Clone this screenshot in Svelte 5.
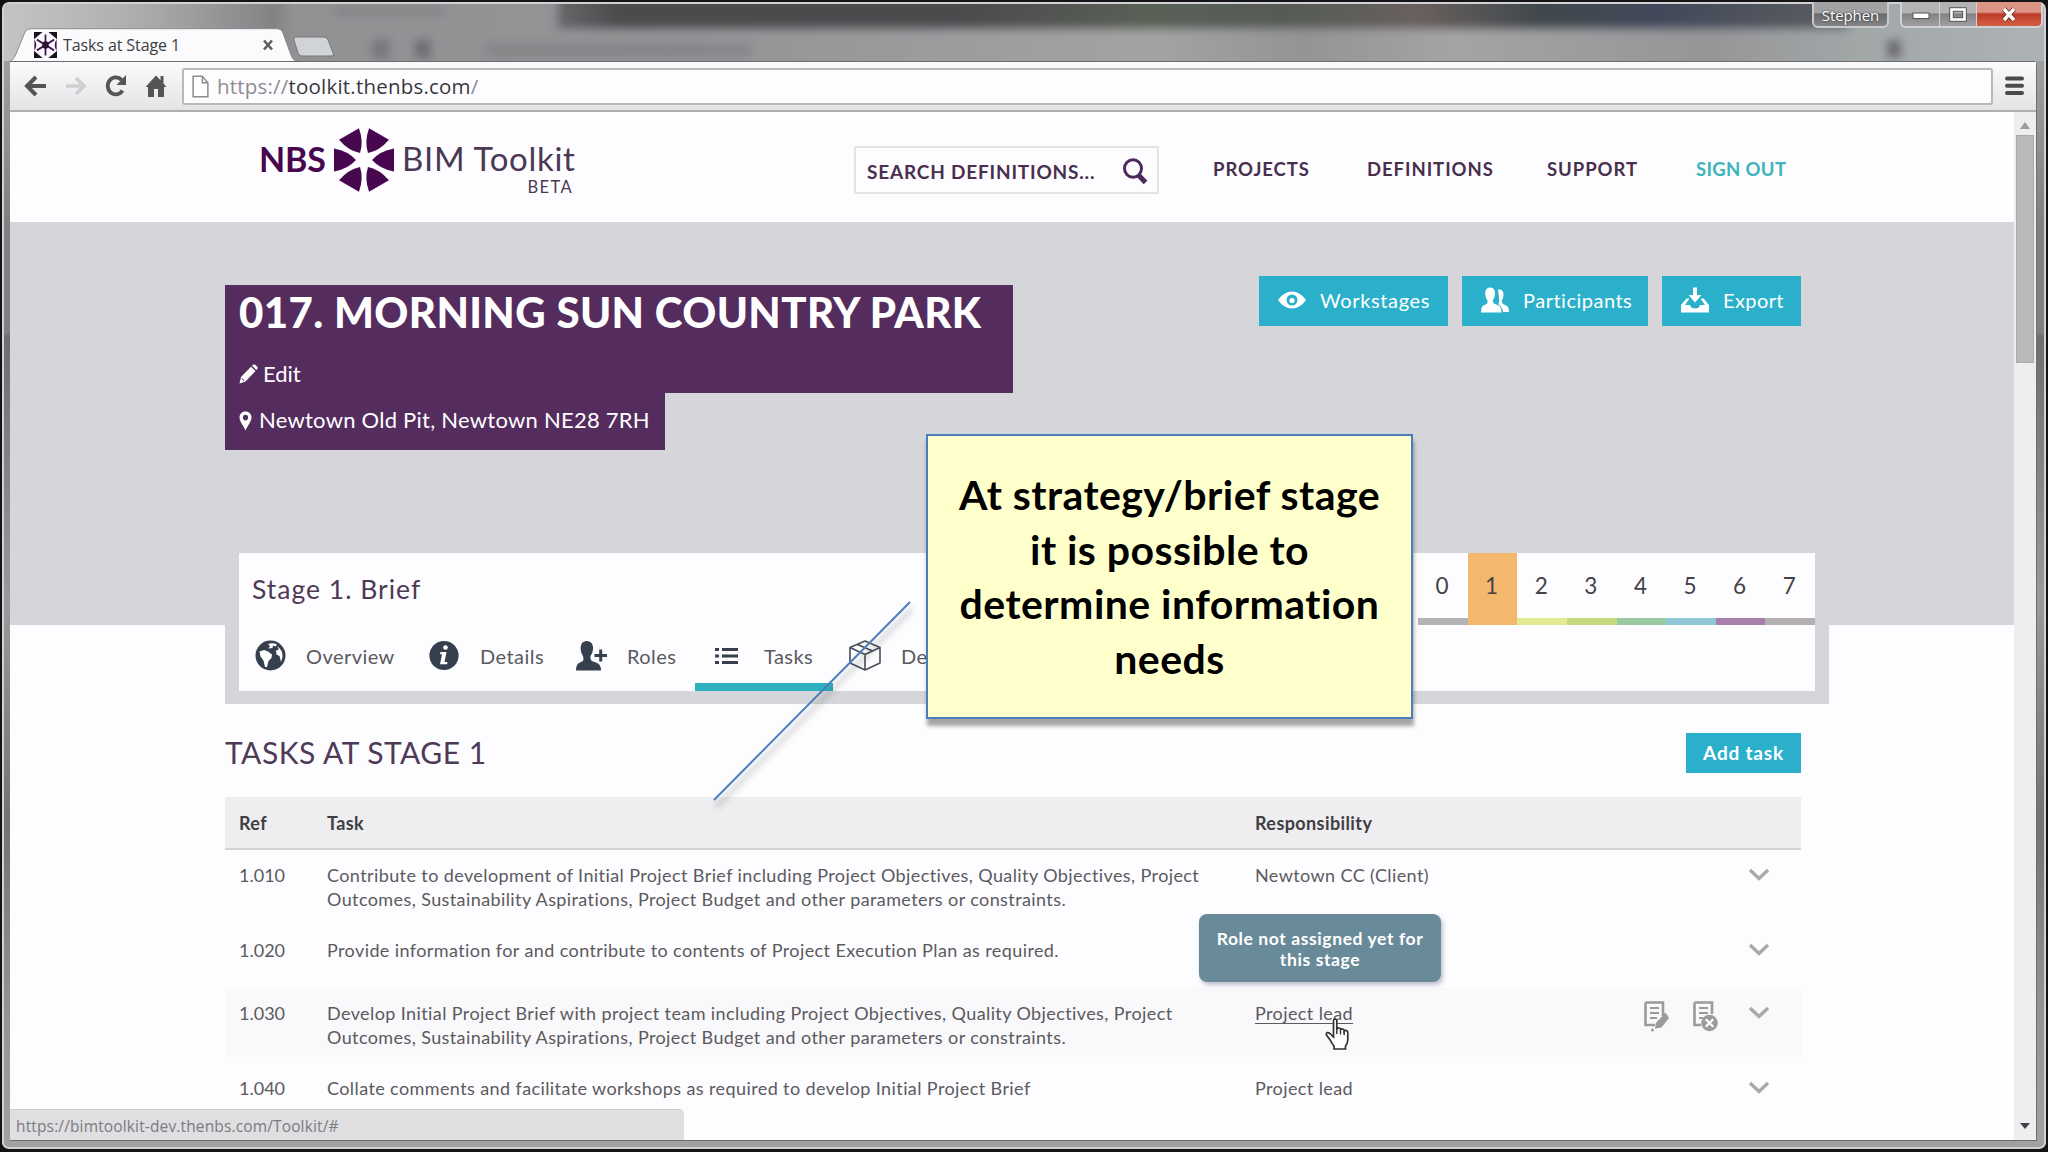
<script>
  const nav = ["PROJECTS", "DEFINITIONS", "SUPPORT"];

  const tabs = [
    { icon: "globe", label: "Overview" },
    { icon: "info", label: "Details" },
    { icon: "role", label: "Roles" },
    { icon: "list", label: "Tasks" },
    { icon: "cube", label: "De" },
  ];

  const stageColors = ["#b4b3b6", "#f3b86e", "#e4ea93", "#c5db7e", "#9bcaa2", "#91c6d4", "#a87eab", "#b5b0b4"];

  const tasks = [
    {
      ref: "1.010",
      lines: [
        "Contribute to development of Initial Project Brief including Project Objectives, Quality Objectives, Project",
        "Outcomes, Sustainability Aspirations, Project Budget and other parameters or constraints.",
      ],
      role: "Newtown CC (Client)",
    },
    {
      ref: "1.020",
      lines: ["Provide information for and contribute to contents of Project Execution Plan as required."],
      role: "",
    },
    {
      ref: "1.030",
      lines: [
        "Develop Initial Project Brief with project team including Project Objectives, Quality Objectives, Project",
        "Outcomes, Sustainability Aspirations, Project Budget and other parameters or constraints.",
      ],
      role: "Project lead",
    },
    {
      ref: "1.040",
      lines: ["Collate comments and facilitate workshops as required to develop Initial Project Brief"],
      role: "Project lead",
    },
  ];

  let activeTab = $state("Tasks");
  let stage = $state(1);
  let hovered = $state(2);
</script>

{#snippet petals()}
  {#each [0, 60, 120, 180, 240, 300] as angle}
    <path d="M8 0Q16 -9 30 -11.500V11.500Q16 9 8 0Z" transform="rotate({angle})" />
  {/each}
{/snippet}

<div class="window">
  <div class="title-bar">
    <div class="ghost" aria-hidden="true">
      <i class="band"></i>
      <i class="blob one"></i>
      <i class="blob two"></i>
      <i class="blob three"></i>
      <i class="blob four"></i>
      <i class="blob five"></i>
    </div>
    <div class="tab">
      <svg class="tab-shape" width="290" height="34" viewBox="0 0 290 34">
        <path d="M0 34C4 32 5 30 7 26L16 4Q18 .7 22 .7H268Q272 .7 273.500 4L282 27Q284 33 289 34Z" fill="#fbfafc" stroke="#8d8c8f" />
      </svg>
      <svg class="favicon" width="23" height="26" viewBox="-32 -32 64 64" preserveAspectRatio="none">
        <path d="M-32 -32H-8L-32 -14ZM32 -32H8L32 -14ZM-32 32H-8L-32 14ZM32 32H8L32 14Z" fill="#1c1020" />
        <path d="M0 -26V26M-24 -13L24 13M-24 13L24 -13" stroke="#451550" stroke-width="5" />
        <path d="M-31 -14Q-20 0 -31 14ZM31 -14Q20 0 31 14Z" fill="#451550" />
        <circle r="9" fill="#2c1233" />
      </svg>
      <span class="tab-title">Tasks at Stage 1</span>
      <svg class="tab-close" width="12" height="12" viewBox="0 0 12 12"><path d="M2 1.500L10 10.500M10 1.500L2 10.500" stroke="#5d5c5f" stroke-width="2.600" /></svg>
    </div>
    <svg class="new-tab" width="42" height="21" viewBox="0 0 42 21">
      <path d="M1 1H31Q34 1 35 4L40.500 18Q41 20 38 20H9Q6 20 5 17L1 4Z" fill="#d0d4d6" stroke="#777" />
    </svg>
    <div class="user-btn">Stephen</div>
    <div class="win-btns">
      <span class="wb min"><svg width="18" height="8" viewBox="0 0 18 8"><rect x="1" y="1" width="16" height="5.500" fill="#fff" stroke="#555" /></svg></span>
      <span class="wb max"><svg width="18" height="15" viewBox="0 0 18 15"><rect x="2.500" y="2.500" width="13" height="10" fill="none" stroke="#555" stroke-width="4.500" /><rect x="2.500" y="2.500" width="13" height="10" fill="none" stroke="#fff" stroke-width="2.600" /></svg></span>
      <span class="wb close"><svg width="18" height="15" viewBox="0 0 18 15"><path d="M4 2L14 13M14 2L4 13" stroke="#6c2d27" stroke-width="5" /><path d="M4 2L14 13M14 2L4 13" stroke="#fff" stroke-width="3.400" /></svg></span>
    </div>
  </div>

  <div class="client">
    <div class="toolbar">
      <svg class="tool" width="24" height="22" viewBox="0 0 24 22"><path d="M12 2L3 11L12 20M3.500 11H22" fill="none" stroke="#555457" stroke-width="4" /></svg>
      <svg class="tool" width="24" height="22" viewBox="0 0 24 22"><path d="M12 3L20 11L12 19M20 11H2" fill="none" stroke="#cfced1" stroke-width="3.600" /></svg>
      <svg class="tool" width="24" height="24" viewBox="0 0 24 24"><path d="M18.500 16.500A8 8.500 0 1 1 17.500 6" fill="none" stroke="#555457" stroke-width="3.800" /><path d="M22 1V11H12.500Z" fill="#555457" /></svg>
      <svg class="tool" width="24" height="24" viewBox="0 0 24 24"><path d="M12 1.500L1.500 13H4V23H10V15H14V23H20V13H22.500L19.500 9.500V2H16.500V6.300Z" fill="#555457" /></svg>
      <div class="address">
        <svg width="17" height="23" viewBox="0 0 18 24"><path d="M1.200 1.200H11L16.800 8V22.800H1.200ZM11 1.200V8H16.800" fill="#fff" stroke="#8d8c8f" stroke-width="1.600" /></svg>
        <span class="url"><span class="scheme">https://</span>toolkit.thenbs.com<span class="scheme">/</span></span>
      </div>
      <svg class="menu" width="19" height="20" viewBox="0 0 19 20"><path d="M2 2.500H17M2 9.700H17M2 17H17" stroke="#4a494c" stroke-width="4" stroke-linecap="round" /></svg>
    </div>

    <div class="viewport">
      <div class="page">
        <header class="site-header">
          <div class="logo">
            <span class="nbs">NBS</span>
            <svg class="mark" width="62" height="64" viewBox="-31 -32 62 64"><g fill="#47074f">{@render petals()}</g></svg>
            <span class="product">BIM Toolkit<small>BETA</small></span>
          </div>
          <div class="search">
            <span>SEARCH DEFINITIONS...</span>
            <svg width="27" height="27" viewBox="0 0 27 27"><ellipse cx="11" cy="10.500" rx="8.500" ry="8.800" fill="none" stroke="#4d2a5c" stroke-width="3" /><path d="M16.500 17L23.500 24.500" stroke="#4d2a5c" stroke-width="5" /></svg>
          </div>
          <nav class="nav">
            {#each nav as item}
              <span>{item}</span>
            {/each}
            <span class="sign-out">SIGN OUT</span>
          </nav>
        </header>

        <section class="hero">
          <div class="project">
            <div class="name-block">
              <h1>017. MORNING SUN COUNTRY PARK</h1>
              <div class="edit">
                <svg width="19" height="20" viewBox="0 0 19 20"><path d="M.5 19.500L2 13L12 2.800L16.500 7L6.500 17.500ZM13 1.800L14.500 .6Q15.500 0 16.500 1L18.300 2.800Q19 4 18.200 5L17.400 6Z" fill="#fff" /><path d="M3 14.500L5 17" stroke="#552c5e" /></svg>
                <span>Edit</span>
              </div>
            </div>
            <div class="place">
              <svg width="13" height="20" viewBox="0 0 13 20"><path fill-rule="evenodd" d="M6.500 .5C2.800 .5 .5 3.200 .5 6.500C.5 10 4.500 15 6.500 19.500C8.500 15 12.500 10 12.500 6.500C12.500 3.200 10.200 .5 6.500 .5ZM6.500 3.800A2.600 2.800 0 1 1 6.500 9.400A2.600 2.800 0 1 1 6.500 3.800Z" fill="#fff" /></svg>
              <span>Newtown Old Pit, Newtown NE28 7RH</span>
            </div>
          </div>
          <div class="actions">
            <button class="btn workstages">
              <svg width="28" height="18" viewBox="0 0 28 18"><path d="M0 9Q6 .5 14 .5T28 9Q22 17.500 14 17.500T0 9Z" fill="#fff" /><circle cx="14" cy="9" r="5.500" fill="#2bb0cb" /><circle cx="14" cy="9.500" r="2.600" fill="#fff" /></svg>
              <span>Workstages</span>
            </button>
            <button class="btn participants">
              <svg width="28" height="26" viewBox="0 0 28 26"><path d="M17 2.500C21 2 23 4.500 22.500 9Q22 12 20.800 13.500Q21 16 22 17L26 19Q28 20.500 28 25H22Q21.500 20 17.500 17.500Q18.500 14 18 11Z" fill="#fff" /><path d="M9 .5C13 .5 14.300 3.500 14 7.500Q13.500 11 12 13Q11.500 15.500 13 16.500L17.500 18.500Q20.500 20 20.500 25.500H0Q0 20 2 18.700L6 16.700Q7 15.500 6.300 13Q4.500 11 4.300 7.500C4 3.500 5.500 .5 9 .5Z" fill="#fff" /></svg>
              <span>Participants</span>
            </button>
            <button class="btn export">
              <svg width="28" height="26" viewBox="0 0 28 26"><path d="M12 .5H16V8H20.500L14 15.500L7.500 8H12Z" fill="#fff" /><path d="M5.500 11.500L0 18V25.500H28V18L22.500 11.500H19.500L24 18H19Q18 21.500 14 21.500T9 18H4L8.500 11.500Z" fill="#fff" /></svg>
              <span>Export</span>
            </button>
          </div>
        </section>

        <section class="stage-frame">
          <div class="stage-card">
            <div class="stage-top">
              <h2>Stage 1. Brief</h2>
              <div class="stages">
                {#each stageColors as color, i}
                  <button class="stage" class:current={stage === i} style:--stage={color} onclick={() => (stage = i)}>{i}</button>
                {/each}
              </div>
            </div>
            <div class="tabs">
              {#each tabs as tab}
                <button class="tab-item {tab.icon}" class:active={activeTab === tab.label} onclick={() => (activeTab = tab.label)}>
                  {#if tab.icon === "globe"}
                    <svg width="31" height="31" viewBox="0 0 31 31"><circle cx="15.500" cy="15.500" r="13.800" fill="#363f4d" stroke="#363f4d" stroke-width="2.400" /><path d="M4.500 11.500L9 10L13 11.500L17 14.500L16.500 18L13.500 21L12 27L10 27L8.500 20.500L5.500 16.500ZM13 4Q18 2.500 22 4.500L20.500 6.500L18 5.500L17.500 8L13.500 8.500L15 6ZM22 6Q28 10 27.500 17L26 22L24.500 16L21.500 14.500L21 10.500L24 9.500Z" fill="#fff" /></svg>
                  {:else if tab.icon === "info"}
                    <svg width="30" height="31" viewBox="0 0 30 31"><circle cx="15" cy="15.500" r="14.600" fill="#363f4d" /><circle cx="16.500" cy="7.500" r="2.300" fill="#fff" /><path d="M11.500 12H17.500L15.500 22H18.500L18 24.300H11L13 14.300H11Z" fill="#fff" /></svg>
                  {:else if tab.icon === "role"}
                    <svg width="31" height="30" viewBox="0 0 31 30"><path d="M10.500 0C15.500 0 17.500 4 17 8.500Q16.500 12.500 14.500 15Q14 19 16 20L21 22Q25 23.500 25 29.500H0Q0 23.500 3 22L7 20Q8 18.500 7 15Q5 12.500 4.700 8.500C4.500 4 6 0 10.500 0Z" fill="#363f4d" /><path d="M18.500 14.500H31M24.700 8.500V20.500" stroke="#363f4d" stroke-width="3" /></svg>
                  {:else if tab.icon === "list"}
                    <svg width="23" height="18" viewBox="0 0 23 18"><path d="M0 2.500H4M0 9H4M0 15.500H4M7 2.500H23M7 9H23M7 15.500H23" stroke="#363f4d" stroke-width="3" /></svg>
                  {:else}
                    <svg width="32" height="31" viewBox="0 0 32 31"><path d="M16 1L31 7.500V23L16 30L1 23V7.500ZM1 7.500L16 14.500L31 7.500M16 14.500V30M8.500 4.500L23.500 11" fill="none" stroke="#4a505a" stroke-width="1.600" stroke-linejoin="round" /></svg>
                  {/if}
                  <span>{tab.label}</span>
                </button>
              {/each}
            </div>
          </div>
        </section>

        <section class="tasks">
          <div class="tasks-head">
            <h3>TASKS AT STAGE 1</h3>
            <button class="btn add">Add task</button>
          </div>
          <div class="row head">
            <span>Ref</span>
            <span>Task</span>
            <span>Responsibility</span>
          </div>
          {#each tasks as task, i}
            <!-- svelte-ignore a11y_no_static_element_interactions -->
            <div class="row" class:single={task.lines.length === 1} class:hover={hovered === i} onmouseenter={() => (hovered = i)}>
              <span class="ref">{task.ref}</span>
              <div class="desc">
                {#each task.lines as line}
                  <p>{line}</p>
                {/each}
              </div>
              <div class="resp">
                <span class="role">{task.role}</span>
                {#if hovered === i}
                  <div class="tooltip">Role not assigned yet for this stage</div>
                  <svg class="pointer" width="24" height="32" viewBox="0 0 24 32"><path d="M8.500 2.500Q8.500 1 10 1T11.800 2.500V12Q12 9.500 14 10T15.500 12Q16 10.500 17.700 11T19.200 13Q20 12 21.500 12.600T22.800 15V22Q22.500 26 20.500 28V31H9V28Q7 26 5.500 22.500L1.500 17Q.8 15 2.500 14.600T6 16.500L8.500 19Z" fill="#fff" stroke="#333" stroke-width="1.700" /><path d="M11.800 12V16M15.500 12V16.500M19.200 13V17" stroke="#333" stroke-width="1.400" /></svg>
                {/if}
              </div>
              <div class="row-tools">
                {#if hovered === i}
                  <svg class="doc" width="25" height="31" viewBox="0 0 25 31"><path d="M1.500 1.500H19V15M1.500 1.500V24H11" fill="none" stroke="#9b9a9d" stroke-width="2.600" /><path d="M6 7H15M6 12H15M6 17H13" stroke="#9b9a9d" stroke-width="2" /><path d="M21.500 11.500L25 17L17.500 26.500L11 27.500L12 22Z" fill="#9b9a9d" /><circle cx="8.500" cy="29" r="1.500" fill="#9b9a9d" /></svg>
                  <svg class="doc" width="25" height="31" viewBox="0 0 25 31"><path d="M1.500 1.500H19V13M1.500 1.500V24H8" fill="none" stroke="#9b9a9d" stroke-width="2.600" /><path d="M6 7H15M6 12H15M6 17H10" stroke="#9b9a9d" stroke-width="2" /><circle cx="16.500" cy="22" r="8.300" fill="#9b9a9d" /><path d="M12.800 18.200L20.200 25.800M20.200 18.200L12.800 25.800" stroke="#fff" stroke-width="2.200" /></svg>
                {/if}
                <svg class="chevron" width="22" height="13" viewBox="0 0 22 13"><path d="M2 2L11 10.500L20 2" fill="none" stroke="#a9a8ab" stroke-width="3.400" /></svg>
              </div>
            </div>
          {/each}
        </section>
      </div>
      <div class="scrollbar">
        <svg width="10" height="7" viewBox="0 0 10 7"><path d="M5 0L10 7H0Z" fill="#9c9b9e" /></svg>
        <div class="thumb"></div>
        <svg class="down" width="10" height="6" viewBox="0 0 10 6"><path d="M0 0H10L5 6Z" fill="#434245" /></svg>
      </div>
      <div class="status">https://bimtoolkit-dev.thenbs.com/Toolkit/#</div>
    </div>
  </div>

  <svg class="leader" width="210" height="215" viewBox="0 0 210 215">
    <path d="M200 5L4 203" stroke="#4a7ebb" stroke-width="2" />
  </svg>
  <div class="callout">At strategy/brief stage it is possible to determine information needs</div>
</div>

<style>
  :global(body) {
    background: #111;
    overflow: hidden;
  }

  .window {
    position: relative;
    box-sizing: border-box;
    width: 2048px;
    height: 1152px;
    padding: 0 9px 8px 8px;
    overflow: hidden;
    border: 2px solid #151416;
    border-width: 2px 2px 3px 2px;
    border-radius: 9px;
    background: linear-gradient(#aaaaab 0, #7f7f81 230px, #808082 330px, #6e6d70 335px, #9a999b 600px, #737274 820px, #929194 1000px, #a2a1a3);
    box-shadow: inset 0 0 0 2px #d2d1d4;
    font-family: Lato, "Open Sans", sans-serif;
    display: flex;
    flex-direction: column;
  }

  button {
    margin: 0;
    padding: 0;
    border: none;
    background: none;
    font: inherit;
    color: inherit;
    cursor: pointer;
  }

  h1,
  h2,
  h3,
  p {
    margin: 0;
    font-weight: 400;
  }

  .title-bar {
    position: relative;
    flex: none;
    height: 59px;
    display: flex;
    font-family: "Open Sans", sans-serif;
  }

  .ghost {
    position: absolute;
    inset: 2px -7px 0 -6px;
    overflow: hidden;
    border-radius: 6px 6px 0 0;
    background: linear-gradient(90deg, #c3c3c2 0, #b9bcbb 60px, #aeb1b0 120px, #a09fa1 180px, #838285 270px, #929194 290px, #949396 700px, #a3a2a4 1150px, #949396 1300px, #a4a3a5 1450px, #969597 1700px, #a1a6a7 1850px, #adb3b4 2040px);
  }

  .band {
    position: absolute;
    left: 554px;
    top: -12px;
    width: 1290px;
    height: 36px;
    background: linear-gradient(90deg, #68676a 0, #4b4a4d 60px 400px, #596056 590px, #565c55 730px, #68605d 860px, #41484c 980px, #42485a 1100px, #5b5e60);
    filter: blur(5px);
  }

  .blob {
    position: absolute;
    top: 36px;
    height: 18px;
    background: #6f6e71;
    filter: blur(4px);
  }

  .one {
    left: 368px;
    width: 18px;
    opacity: 0.7;
  }

  .two {
    left: 411px;
    width: 16px;
  }

  .three {
    left: 482px;
    width: 265px;
    height: 13px;
    top: 40px;
    opacity: 0.35;
  }

  .four {
    left: 1883px;
    width: 14px;
  }

  .five {
    left: 330px;
    top: 2px;
    width: 110px;
    height: 10px;
    opacity: 0.35;
  }

  .tab {
    position: relative;
    width: 286px;
    height: 34px;
    margin-top: 26px;
    display: flex;
    align-items: center;
  }

  .tab-shape {
    position: absolute;
    left: -1px;
    top: 0;
  }

  .favicon {
    position: relative;
    margin-left: 24px;
  }

  .tab-title {
    position: relative;
    width: 199px;
    margin-left: 6px;
    font-size: 16px;
    letter-spacing: -0.1px;
    color: #3d3c40;
  }

  .tab-close {
    position: relative;
  }

  .new-tab {
    position: relative;
    margin: 34px 0 0 -3px;
  }

  .user-btn {
    position: relative;
    box-sizing: border-box;
    width: 77px;
    height: 26px;
    margin-left: auto;
    border: 2px solid #c9c8ca;
    border-top: none;
    border-radius: 0 0 6px 6px;
    background: linear-gradient(#a2a1a3 0 45%, #6a696b 50%, #858486);
    color: #fff;
    font-size: 15px;
    letter-spacing: -0.1px;
    line-height: 26px;
    text-align: center;
    text-shadow: 0 0 2px #222;
  }

  .win-btns {
    position: relative;
    box-sizing: border-box;
    display: flex;
    width: 143px;
    height: 26px;
    margin: 0 -6px 0 11px;
    border: 2px solid #d2d1d4;
    border-top: none;
    border-radius: 0 0 6px 6px;
    overflow: hidden;
  }

  .wb {
    display: flex;
    align-items: center;
    justify-content: center;
    background: linear-gradient(#b3b2b5 0 45%, #828184 50%, #a09fa2);
  }

  .min {
    width: 37px;
    padding-top: 4px;
    border-right: 1px solid #d2d1d4;
  }

  .max {
    width: 36px;
    border-right: 1px solid #d2d1d4;
  }

  .close {
    flex: 1;
    background: linear-gradient(#dc9487 0 42%, #bd3b27 50%, #d35f43);
  }

  .client {
    position: relative;
    flex: 1;
    min-height: 0;
    display: flex;
    flex-direction: column;
    border: 1px solid #6e6d70;
    border-left: 0;
    border-radius: 0 4px 0 0;
    background: #fdfcfe;
  }

  .toolbar {
    box-sizing: border-box;
    height: 50px;
    flex: none;
    display: flex;
    align-items: center;
    padding: 0 12px 0 14px;
    gap: 16px;
    background: linear-gradient(#fbfafc, #e4e3e6);
    border-bottom: 2px solid #aeadb0;
  }

  .address {
    box-sizing: border-box;
    flex: 1;
    height: 37px;
    margin-left: -2px;
    margin-right: -4px;
    padding-left: 8px;
    display: flex;
    align-items: center;
    gap: 8px;
    border: 2px solid #b9b8bb;
    border-radius: 3px;
    background: #fdfcfe;
    font-family: "Open Sans", sans-serif;
    font-size: 20.500px;
    letter-spacing: 0.2px;
    color: #39383c;
  }

  .scheme {
    color: #8d8c90;
  }

  .viewport {
    position: relative;
    flex: 1;
    min-height: 0;
    display: flex;
  }

  .page {
    width: 2004px;
    height: 100%;
    overflow: hidden;
    background: #fdfcfe;
  }

  .site-header {
    box-sizing: border-box;
    height: 110px;
    padding-left: 249px;
    display: flex;
    color: #47304f;
  }

  .logo {
    display: flex;
    width: 595px;
    padding-top: 16px;
    color: #47074f;
  }

  .nbs {
    width: 74px;
    font-size: 34px;
    font-weight: 700;
    line-height: 61px;
    letter-spacing: -0.2px;
  }

  .product {
    width: 171px;
    margin-left: 7px;
    display: flex;
    flex-direction: column;
    font-size: 33px;
    line-height: 60px;
    letter-spacing: 0.7px;
    color: #4a3854;
    white-space: nowrap;
  }

  .product small {
    align-self: flex-end;
    margin-top: -12px;
    font-size: 16.500px;
    line-height: 22px;
    letter-spacing: 1.400px;
  }

  .search {
    box-sizing: border-box;
    width: 305px;
    height: 48px;
    margin-top: 34px;
    padding: 2px 8px 0 11px;
    display: flex;
    align-items: center;
    justify-content: space-between;
    border: 2px solid #e4e3e6;
    font-size: 19px;
    font-weight: 700;
    letter-spacing: 0.800px;
  }

  .nav {
    display: grid;
    grid-template-columns: 154px 180px 149px auto;
    margin: 46px 0 0 54px;
    font-size: 18.500px;
    font-weight: 700;
    line-height: 22px;
    letter-spacing: 0.950px;
  }

  .sign-out {
    color: #3db3bb;
    letter-spacing: 0.350px;
  }

  .hero {
    box-sizing: border-box;
    height: 403px;
    padding: 54px 213px 0 215px;
    display: flex;
    justify-content: space-between;
    background: #d4d6d9;
    color: #fff;
  }

  .project {
    padding-top: 9px;
  }

  .name-block {
    box-sizing: border-box;
    width: 788px;
    height: 108px;
    padding-left: 14px;
    background: #552c5e;
  }

  h1 {
    font-size: 42px;
    font-weight: 900;
    line-height: 55px;
    letter-spacing: 0.380px;
    white-space: nowrap;
  }

  .edit {
    display: flex;
    align-items: center;
    gap: 5px;
    margin-top: 21px;
    font-size: 22px;
    line-height: 26px;
  }

  .place {
    box-sizing: border-box;
    width: 440px;
    height: 57px;
    padding: 14px 0 0 14px;
    display: flex;
    gap: 7px;
    align-items: flex-start;
    background: #552c5e;
    font-size: 22px;
    line-height: 26px;
    letter-spacing: 0.250px;
    white-space: nowrap;
  }

  .place svg {
    margin-top: 4px;
  }

  .actions {
    display: flex;
    gap: 14px;
  }

  .btn {
    box-sizing: border-box;
    height: 50px;
    display: flex;
    align-items: center;
    gap: 14px;
    padding: 0 0 2px 19px;
    background: #2bb0cb;
    color: #fff;
    font-size: 20px;
    letter-spacing: 0.650px;
    white-space: nowrap;
  }

  .workstages {
    width: 189px;
  }

  .participants {
    width: 186px;
    letter-spacing: 0.500px;
  }

  .export {
    width: 139px;
    letter-spacing: 0.400px;
  }

  .stage-frame {
    box-sizing: border-box;
    width: 1604px;
    height: 151px;
    margin: -72px 0 0 215px;
    background: #d4d6d9;
  }

  .stage-card {
    height: 138px;
    margin: 0 14px;
    background: #fdfcfe;
    overflow: hidden;
  }

  .stage-top {
    display: flex;
    justify-content: space-between;
    height: 72px;
  }

  h2 {
    margin-left: 13px;
    font-size: 26.500px;
    line-height: 72px;
    letter-spacing: 1px;
    color: #4e3a56;
  }

  .stages {
    display: flex;
  }

  .stage {
    box-sizing: border-box;
    width: 49.600px;
    height: 72px;
    padding-right: 2px;
    border-bottom: 7px solid var(--stage);
    font-size: 22.500px;
    color: #434247;
  }

  .current {
    background: var(--stage);
  }

  .tabs {
    display: grid;
    grid-template-columns: 176px 146px 134px 138px auto;
    height: 66px;
  }

  .tab-item {
    box-sizing: border-box;
    height: 66px;
    display: flex;
    align-items: center;
    padding: 0 0 5px 14px;
    gap: 20px;
    font-size: 20px;
    letter-spacing: 0.450px;
    color: #5a595e;
    white-space: nowrap;
  }

  .tab-item.globe {
    padding-left: 16px;
  }

  .tab-item.info {
    gap: 21px;
  }

  .tab-item.role {
    padding-left: 15px;
  }

  .tab-item.list {
    padding: 3px 0 0 20px;
    gap: 26px;
    border-bottom: 8px solid transparent;
  }

  .tab-item.list.active {
    border-bottom-color: #2fb0bf;
  }

  .tab-item.cube {
    padding-left: 16px;
  }

  .tasks {
    width: 1576px;
    margin-left: 215px;
  }

  .tasks-head {
    height: 93px;
    display: flex;
    justify-content: space-between;
  }

  h3 {
    margin-top: 30px;
    font-size: 30px;
    line-height: 36px;
    letter-spacing: 0.500px;
    color: #4e3a56;
  }

  .add {
    width: 115px;
    height: 40px;
    margin-top: 29px;
    padding: 0 0 1px;
    justify-content: center;
    font-size: 19px;
    font-weight: 700;
    letter-spacing: 0.800px;
  }

  .row {
    box-sizing: border-box;
    height: 75px;
    display: grid;
    grid-template-columns: 88px 928px 328px 1fr;
    padding: 13px 0 0 14px;
    border-bottom: 6px solid transparent;
    background-clip: padding-box;
    font-size: 18px;
    line-height: 24px;
    letter-spacing: 0.400px;
    color: #5b5a5e;
    white-space: nowrap;
  }

  .row.head {
    height: 53px;
    padding-top: 14px;
    border-bottom: 2px solid #d4d4d6;
    background: #eeeef0;
    font-weight: 700;
    color: #3f3e43;
  }

  .single {
    height: 63px;
  }

  .hover {
    background-color: #f9f8fa;
  }

  .ref {
    letter-spacing: 0;
  }

  .resp {
    position: relative;
  }

  .hover .role {
    text-decoration: underline;
    text-underline-offset: 3px;
  }

  .tooltip {
    position: absolute;
    left: -56px;
    top: -87px;
    box-sizing: border-box;
    width: 242px;
    height: 68px;
    padding: 14px 14px 0;
    border-radius: 8px;
    background: #698b99;
    box-shadow: 2px 3px 4px rgba(80, 80, 120, 0.35);
    color: #fff;
    font-weight: 700;
    font-size: 17.500px;
    line-height: 21px;
    letter-spacing: 0.600px;
    text-align: center;
    white-space: normal;
  }

  .pointer {
    position: absolute;
    left: 70px;
    top: 17px;
  }

  .row-tools {
    height: 31px;
    display: flex;
    justify-content: flex-end;
    gap: 24px;
    padding-right: 31px;
  }

  .chevron {
    margin: 5px 0 0 6px;
  }

  .scrollbar {
    flex: 1;
    display: flex;
    flex-direction: column;
    align-items: center;
    padding: 10px 0 11px;
    background: #eceef0;
  }

  .thumb {
    box-sizing: border-box;
    width: 18px;
    height: 228px;
    margin-top: 6px;
    border: 1px solid #a9a8ab;
    background: #b9b8bb;
  }

  .down {
    margin-top: auto;
  }

  .status {
    position: absolute;
    left: 0;
    bottom: 0;
    box-sizing: border-box;
    width: 674px;
    height: 31px;
    padding-left: 6px;
    border-radius: 0 5px 0 0;
    border-top: 1px solid #cfcfd1;
    background: #dfdee1;
    font-family: "Open Sans", sans-serif;
    font-size: 15.500px;
    line-height: 33px;
    letter-spacing: 0.140px;
    color: #7c7b80;
  }

  .callout {
    position: absolute;
    left: 924px;
    top: 432px;
    box-sizing: border-box;
    width: 487px;
    height: 285px;
    padding: 32px 16px 0;
    border: 2px solid #4a7ebb;
    background: #ffffcc;
    box-shadow: 1px 7px 4px rgba(0, 0, 0, 0.35);
    color: #000;
    font-size: 41px;
    font-weight: 700;
    line-height: 54.700px;
    letter-spacing: 0.450px;
    text-align: center;
  }

  .leader {
    position: absolute;
    left: 708px;
    top: 595px;
    filter: drop-shadow(2px 7px 3px rgba(0, 0, 0, 0.35));
  }
</style>
